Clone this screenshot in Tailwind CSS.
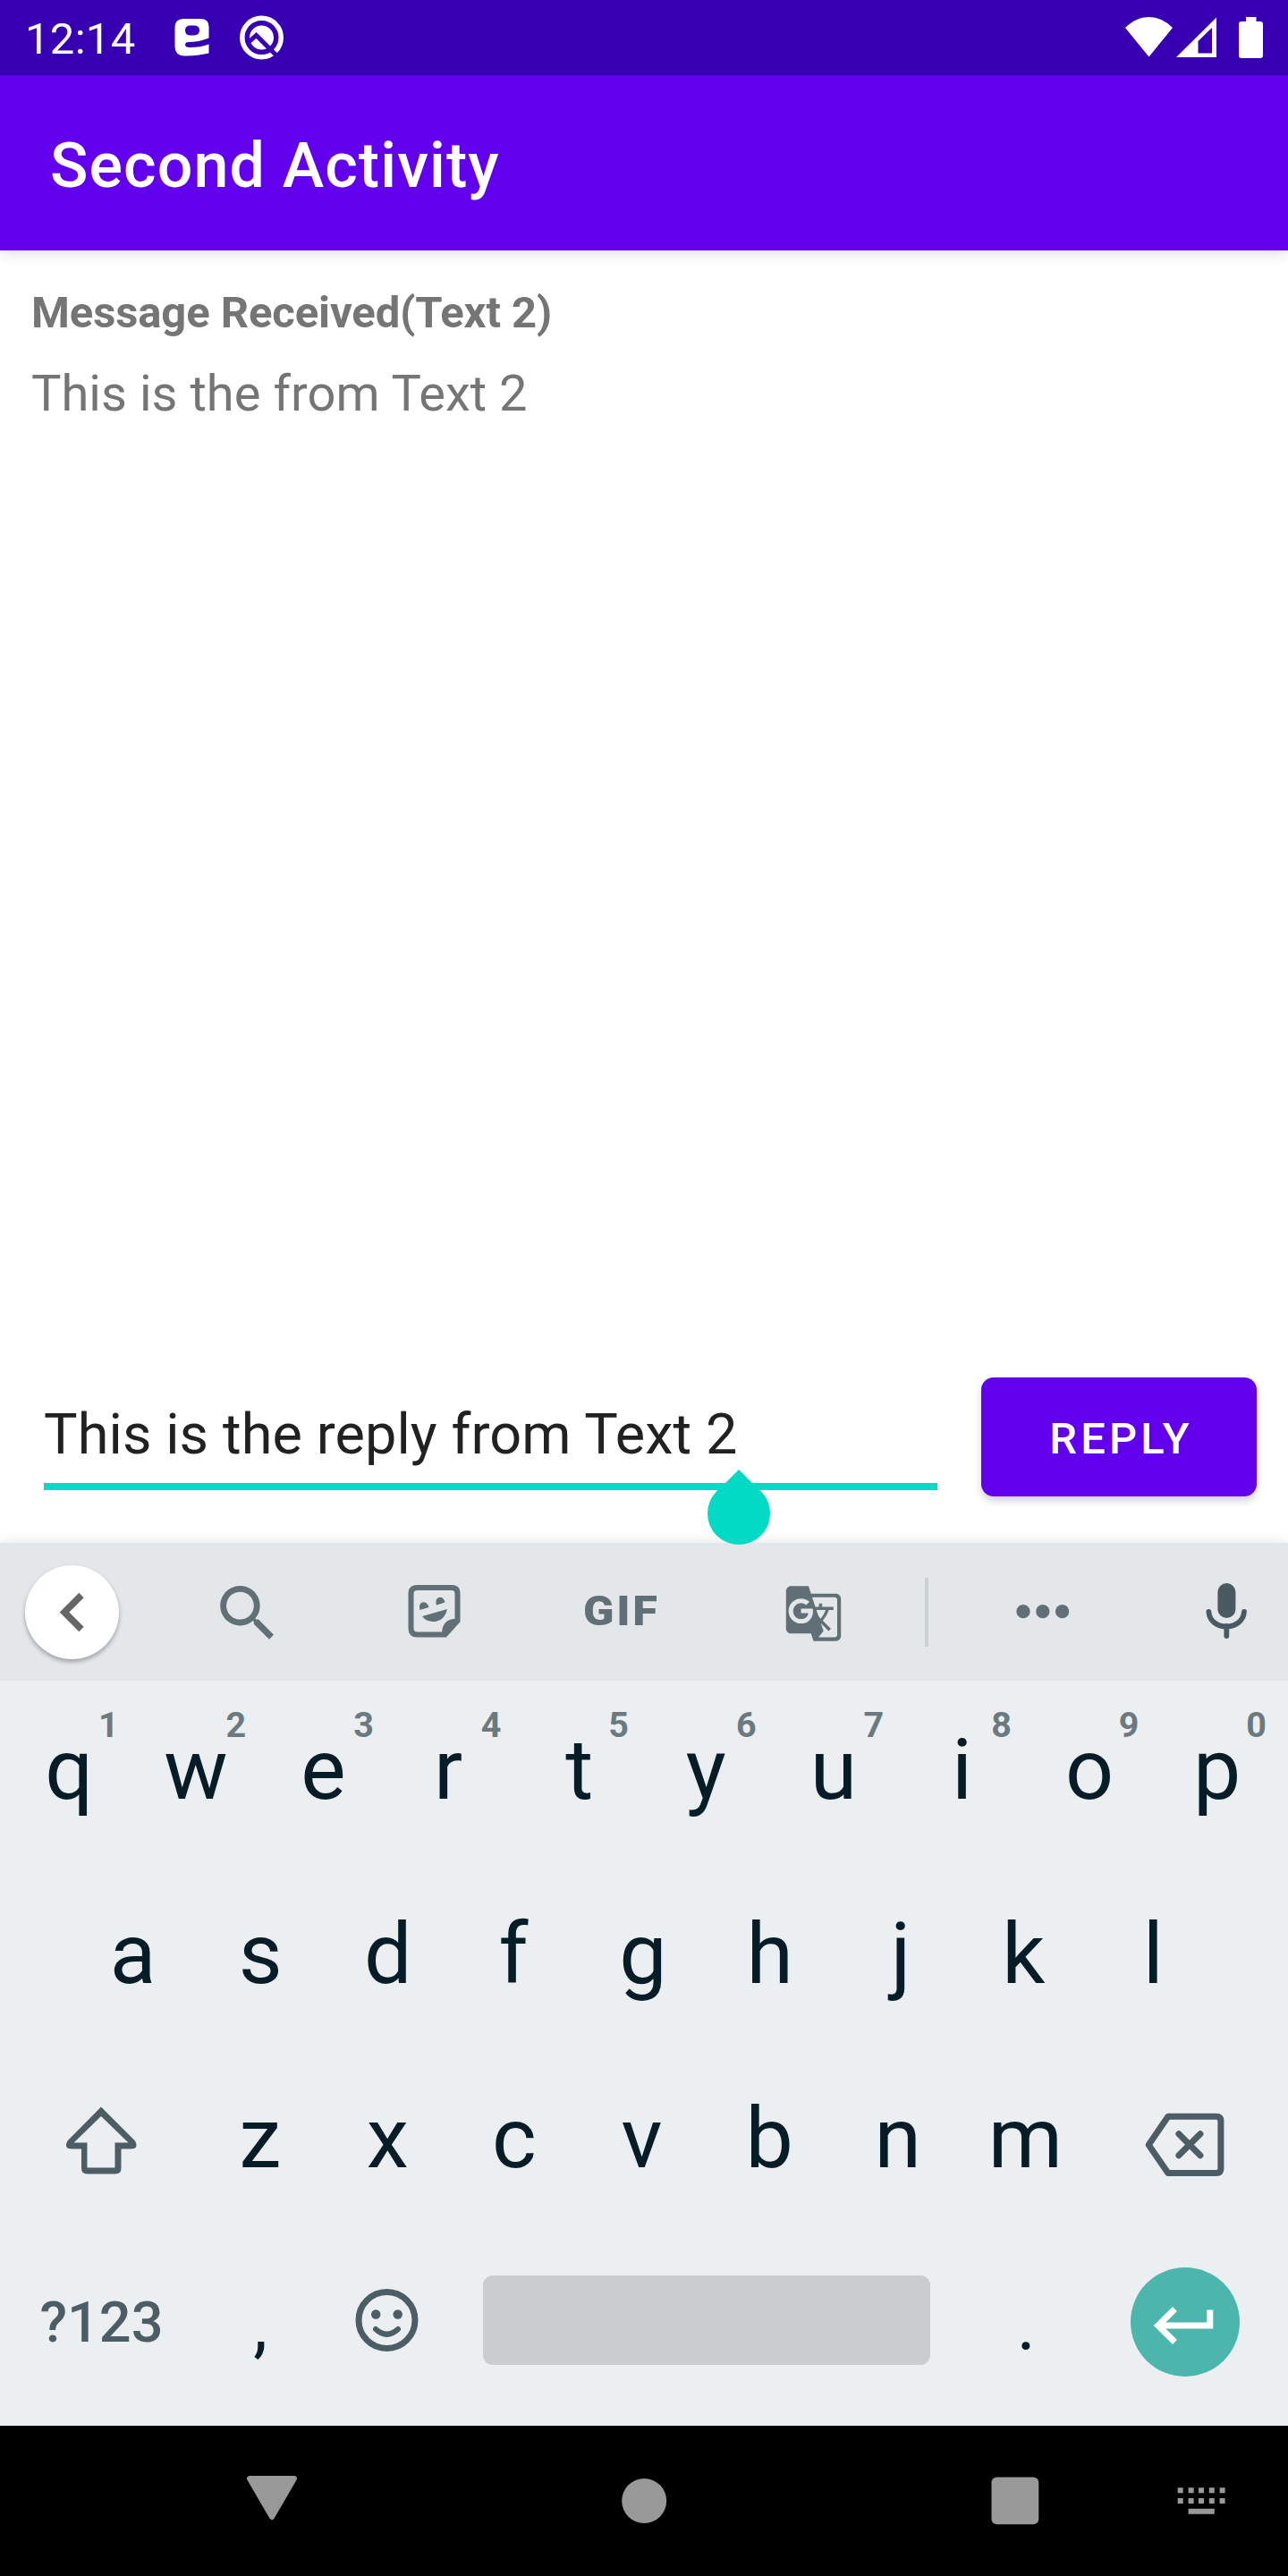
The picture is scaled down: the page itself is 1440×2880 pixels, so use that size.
<!DOCTYPE html>
<html lang="en">
<head>
<meta charset="utf-8">
<title>Second Activity</title>
<script src="https://cdn.jsdelivr.net/npm/@tailwindcss/browser@4"></script>
</head>
<body class="bg-white">
<div class="flex h-[2880px] w-[1440px] flex-col overflow-hidden font-['Roboto',sans-serif]">

  <!-- Status bar -->
  <header class="flex h-[84px] shrink-0 items-start bg-[#3700b3] text-white">
    <div class="w-[190px] pl-[28px] pt-[2px] text-[49px] leading-[84px] tracking-[0.3px]">12:14</div>
    <svg class="h-[84px] w-[50px]" viewBox="190 0 50 84" fill="#fff"><path d="M205 21H224Q233.500 21 233.500 30V42.500Q222 47 211 47Q207 47 207 50Q207 53 212 53Q224 53 233.500 49.500V59.500Q218 63 206 62.500Q195.500 62 195.500 52V31Q195.500 21 205 21ZM213 28.500Q207 28.500 207 34Q207 39.500 213 39.500H217Q223 39 223 34Q223 28.500 217 28.500Z" fill-rule="evenodd"/></svg>
    <svg class="ml-[22px] h-[84px] w-[60px]" viewBox="262 0 60 84" fill="none"><circle cx="292.500" cy="42" r="21.700" stroke="#fff" stroke-width="5.500"/><circle cx="292.500" cy="42" r="13.500" fill="#fff"/><path d="M277 48L286.500 39.500L316 69" stroke="#3700b3" stroke-width="5"/></svg>
    <div class="ml-auto flex pr-[22px]">
      <svg class="h-[84px] w-[60px]" viewBox="1254 0 60 84" fill="#fff"><path d="M1258 31Q1270 19 1284.500 19T1311 31L1284.500 63.500Z"/></svg>
      <svg class="h-[84px] w-[56px]" viewBox="1314 0 56 84" fill="#fff"><path d="M1315 64L1360 19.500V64ZM1339.500 46V59.500H1355V31Z" fill-rule="evenodd"/></svg>
      <svg class="h-[84px] w-[48px]" viewBox="1370 0 48 84" fill="#fff"><path d="M1393 19H1404.500V24H1409Q1412 24 1412 27V62Q1412 65 1409 65H1388Q1385 65 1385 62V27Q1385 24 1388 24H1393Z"/></svg>
    </div>
  </header>

  <!-- App bar -->
  <div class="z-10 flex h-[196px] shrink-0 items-center bg-[#6200ee] pt-[6px] pl-[56px] shadow-[0_4px_14px_rgba(0,0,0,0.12)]">
    <h1 class="text-[70px] leading-[82px] font-medium tracking-[1.1px] text-white">Second Activity</h1>
  </div>

  <!-- Message and reply form -->
  <main class="flex h-[1445px] shrink-0 flex-col pt-[41px] pr-[35px] pb-[52px] text-[#757575]">
    <h2 class="pl-[35px] text-[49px] leading-[58px] font-bold tracking-[-0.11px]">Message Received(Text 2)</h2>
    <p class="mt-[28px] pl-[35px] text-[56px] leading-[66px] tracking-[0.05px]">This is the from Text 2</p>
    <div class="mt-auto flex justify-between pl-[49px]">
      <div class="relative h-[126px] w-[999px] border-b-8 border-[#03dac5] pt-[9px]">
        <div class="text-[63px] leading-[109px] tracking-[0.09px] text-[#212121]">This is the reply from Text 2</div>
        <svg class="absolute top-[103px] left-[742px] z-20 h-[84px] w-[70px]" viewBox="0 0 70 84" fill="#03dac5"><circle cx="35" cy="49" r="35"/><path d="M35 0L60 25H10Z"/></svg>
      </div>
      <button class="h-[133px] w-[308px] rounded-[14px] bg-[#6200ee] pt-[4px] pl-[5px] text-[49px] font-medium tracking-[4.1px] text-white shadow-[0_5px_9px_rgba(0,0,0,0.18)]">REPLY</button>
    </div>
  </main>

  <!-- Keyboard -->
  <section class="flex h-[987px] shrink-0 flex-col bg-[#ebeff2] shadow-[0_0_14px_rgba(0,0,0,0.12)]">
    <div class="flex h-[154px] shrink-0 items-center bg-[#e3e7ea] pl-[28px]">
      <button class="flex size-[105px] items-center justify-center rounded-full bg-white shadow-[0_3px_5px_rgba(0,0,0,0.3)]">
        <svg class="size-[105px]" viewBox="28 1749 105 105" fill="none" stroke="#666" stroke-width="7.500"><path d="M91 1782.500L72 1801.500L91 1820.500"/></svg>
      </button>
      <svg class="ml-[103px] h-[154px] w-[82px]" viewBox="0 -11 24 45" fill="#616f76"><path d="M15.500 14h-.79l-.28-.27C15.410 12.590 16 11.110 16 9.500 16 5.910 13.090 3 9.500 3S3 5.910 3 9.500 5.910 16 9.500 16c1.610 0 3.090-.59 4.230-1.570l.27.28v.79l5 4.990L20.490 19l-4.990-5zm-6 0C7.010 14 5 11.990 5 9.500S7.010 5 9.500 5 14 7.010 14 9.500 11.990 14 9.500 14z"/></svg>
      <svg class="ml-[132px] h-[154px] w-[70px]" viewBox="450 1725 70 154" fill="#616f76"><path d="M466.500 1775H505Q511.500 1775 511.500 1781.500V1812L497.500 1827.500H466.500Q459.500 1827.500 459.500 1820.500V1781.500Q459.500 1775 466.500 1775Z" fill="none" stroke="#616f76" stroke-width="6"/><path d="M513 1810H507Q495 1811.500 494 1825V1829H499L513 1813Z"/><path d="M469.500 1800Q467.500 1793.500 472 1791.500Q477.500 1790.500 479.500 1797ZM488 1794.500Q486 1788 490.500 1786Q496 1785 497.500 1791.500ZM472 1807L500 1799Q497.500 1811 487.500 1812.800Q477 1814 472 1807Z"/></svg>
      <div class="ml-[132px] w-[100px] origin-left scale-x-110 pb-[2px] text-[46px] leading-[54px] font-black tracking-[2.5px] text-[#616f76]">GIF</div>
      <svg class="ml-[124px] h-[154px] w-[67px]" viewBox="0 -16.300 24 55.200" fill="#616f76"><path d="M21 4H11l-1-3H3c-1.100 0-2 .9-2 2v15c0 1.100.9 2 2 2h8l1 3h9c1.100 0 2-.9 2-2V6c0-1.100-.9-2-2-2zM7 16c-2.760 0-5-2.240-5-5s2.240-5 5-5c1.350 0 2.480.5 3.350 1.300L9.030 8.570c-.38-.36-1.040-.78-2.030-.78-1.740 0-3.150 1.440-3.150 3.210S5.260 14.210 7 14.210c2.010 0 2.840-1.440 2.920-2.410H7v-1.710h4.680c.07.31.12.61.12 1.020C11.800 13.970 9.890 16 7 16zm6.170-5.420h3.700c-.43 1.250-1.110 2.430-2.050 3.470-.31-.35-.6-.72-.86-1.100l-.79-2.370zm8.330 9.920c0 .55-.45 1-1 1H14l2-2.500-1.040-3.100 3.100 3.100.92-.92-3.300-3.250.02-.02c1.130-1.250 1.930-2.690 2.400-4.220H20v-1.300h-4.530V8h-1.290v1.290h-1.440L11.460 5.500h9.040c.55 0 1 .45 1 1v14z"/></svg>
      <div class="ml-[91px] h-[77px] w-[4px] bg-[#cbd0d3]"></div>
      <svg class="ml-[92px] h-[154px] w-[70px]" viewBox="1130 1725 70 154" fill="#616f76"><circle cx="1144" cy="1801.700" r="7.600"/><circle cx="1165.800" cy="1801.700" r="7.600"/><circle cx="1187.600" cy="1801.700" r="7.600"/></svg>
      <svg class="ml-[140px] h-[154px] w-[60px]" viewBox="1340 1725 60 154" fill="#4a5a62"><rect x="1361.400" y="1770" width="20" height="39" rx="10"/><path d="M1351.400 1802C1353 1824 1389 1824 1391 1802M1371.300 1818V1829" fill="none" stroke="#4a5a62" stroke-width="5.800" stroke-linecap="round"/></svg>
    </div>

    <div class="grid h-[203px] shrink-0 grid-cols-10 pr-[8px] pl-[6px] text-center text-[95px] leading-[199px] text-[#061d27]">
      <div class="relative">q<span class="absolute top-[27px] right-[16px] text-[39.5px] leading-[46px] font-bold text-[#6c797f]">1</span></div>
      <div class="relative pr-[2px]">w<span class="absolute top-[27px] right-[16px] text-[39.5px] leading-[46px] font-bold text-[#6c797f]">2</span></div>
      <div class="relative pr-[2px]">e<span class="absolute top-[27px] right-[16px] text-[39.5px] leading-[46px] font-bold text-[#6c797f]">3</span></div>
      <div class="relative pr-[8px]">r<span class="absolute top-[27px] right-[16px] text-[39.5px] leading-[46px] font-bold text-[#6c797f]">4</span></div>
      <div class="relative">t<span class="absolute top-[27px] right-[16px] text-[39.5px] leading-[46px] font-bold text-[#6c797f]">5</span></div>
      <div class="relative pr-[2px]">y<span class="absolute top-[27px] right-[16px] text-[39.5px] leading-[46px] font-bold text-[#6c797f]">6</span></div>
      <div class="relative pr-[2px]">u<span class="absolute top-[27px] right-[16px] text-[39.5px] leading-[46px] font-bold text-[#6c797f]">7</span></div>
      <div class="relative">i<span class="absolute top-[27px] right-[16px] text-[39.5px] leading-[46px] font-bold text-[#6c797f]">8</span></div>
      <div class="relative">o<span class="absolute top-[27px] right-[16px] text-[39.5px] leading-[46px] font-bold text-[#6c797f]">9</span></div>
      <div class="relative">p<span class="absolute top-[27px] right-[16px] text-[39.5px] leading-[46px] font-bold text-[#6c797f]">0</span></div>
    </div>

    <div class="grid h-[206px] shrink-0 grid-cols-9 pr-[79.3px] pl-[77.3px] text-center text-[95px] leading-[205px] text-[#061d27]">
      <div>a</div>
      <div>s</div>
      <div>d</div>
      <div class="pr-[5px]">f</div>
      <div>g</div>
      <div class="pr-[2px]">h</div>
      <div class="pl-[6px]">j</div>
      <div class="pr-[5px]">k</div>
      <div>l</div>
    </div>

    <div class="grid h-[206px] shrink-0 grid-cols-[1.5fr_repeat(7,1fr)_1.5fr] pr-[8.5px] pl-[5.5px] text-center text-[95px] leading-[205px] text-[#061d27]">
      <svg class="h-[206px] w-[213.9px]" viewBox="6 2288 213.900 206" fill="#4c5d65"><path d="M113 2355.500L75.500 2393.500Q71 2402.500 80 2402.500H91V2424Q91 2430.500 97.500 2430.500H129Q135.500 2430.500 135.500 2424V2402.500H146.500Q155.500 2402.500 151 2393.500ZM113 2366L143.500 2395.500H128.500V2423.500H97.500V2395.500H82.600Z" fill-rule="evenodd"/></svg>
      <div>z</div>
      <div>x</div>
      <div class="pr-[2px]">c</div>
      <div class="pr-[2px]">v</div>
      <div class="pr-[2px]">b</div>
      <div>n</div>
      <div>m</div>
      <svg class="h-[206px] w-[213.9px]" viewBox="1217.600 2288 213.900 206" fill="none" stroke="#4c5d65" stroke-width="7" stroke-linejoin="round" stroke-linecap="round"><path d="M1305.500 2366.200H1359.500Q1364.500 2366.200 1364.500 2371.200V2424.500Q1364.500 2429.500 1359.500 2429.500H1305.500L1283.800 2398ZM1317.500 2385.800L1341.500 2409.800M1341.500 2385.800L1317.500 2409.800"/></svg>
    </div>

    <div class="flex h-[218px] shrink-0 px-[7px] text-center text-[#061d27]">
      <div class="w-[213.9px] pt-[3px] pr-[1px] text-[63px] leading-[199px] font-medium text-[#4c5d65]">?123</div>
      <div class="w-[142.6px] pt-[4px] pr-[2px] text-[80px] leading-[204px]">,</div>
      <svg class="h-[206px] w-[142.6px]" viewBox="363.500 2494 142.600 206" fill="#4c5d65"><circle cx="433" cy="2594" r="31.500" fill="none" stroke="#4c5d65" stroke-width="7"/><circle cx="420.700" cy="2587.500" r="5.200"/><circle cx="445.200" cy="2587.500" r="5.200"/><path d="M420.500 2604Q433 2615.500 445.500 2604" fill="none" stroke="#4c5d65" stroke-width="6" stroke-linecap="round"/></svg>
      <div class="mt-[50px] ml-[34px] h-[100px] w-[500px] rounded-[11px] bg-[#c9cdd0]"></div>
      <div class="ml-[35px] w-[142.6px] pt-[4px] pl-[2px] text-[80px] leading-[204px]">.</div>
      <div class="mt-[41px] ml-auto mr-[47px] size-[122px] rounded-full bg-[#4db6ac]">
        <svg class="size-[122px]" viewBox="1264.500 2535.500 122 122" fill="none" stroke="#fff" stroke-width="7"><path d="M1353.300 2583V2600.500H1297M1314 2582L1295.300 2600.500L1314 2619"/></svg>
      </div>
    </div>
  </section>

  <!-- Navigation bar -->
  <nav class="flex h-[168px] shrink-0 bg-black">
    <svg class="ml-[264px] h-[168px] w-[80px]" viewBox="264 2712 80 168" fill="#999" stroke="#999" stroke-width="6" stroke-linejoin="round"><path d="M279 2771H329L304 2814Z"/></svg>
    <svg class="ml-[336px] h-[168px] w-[80px]" viewBox="680 2712 80 168" fill="#999"><circle cx="720.200" cy="2796" r="25"/></svg>
    <svg class="ml-[335px] h-[168px] w-[80px]" viewBox="1095 2712 80 168" fill="#999"><rect x="1108.500" y="2769.500" width="52.800" height="52.800" rx="6"/></svg>
    <svg class="ml-[128px] h-[168px] w-[80px]" viewBox="1303 2712 80 168" fill="#999"><path d="M1316.700 2781.200h6v6h-6zM1328.600 2781.200h6v6h-6zM1340 2781.200h6v6h-6zM1351.800 2781.200h6v6h-6zM1363.600 2781.200h6v6h-6zM1316.700 2793h6v6h-6zM1328.600 2793h6v6h-6zM1340 2793h6v6h-6zM1351.800 2793h6v6h-6zM1363.600 2793h6v6h-6zM1328.600 2804.700h29.200v6h-29.200z"/></svg>
  </nav>
</div>
</body>
</html>
